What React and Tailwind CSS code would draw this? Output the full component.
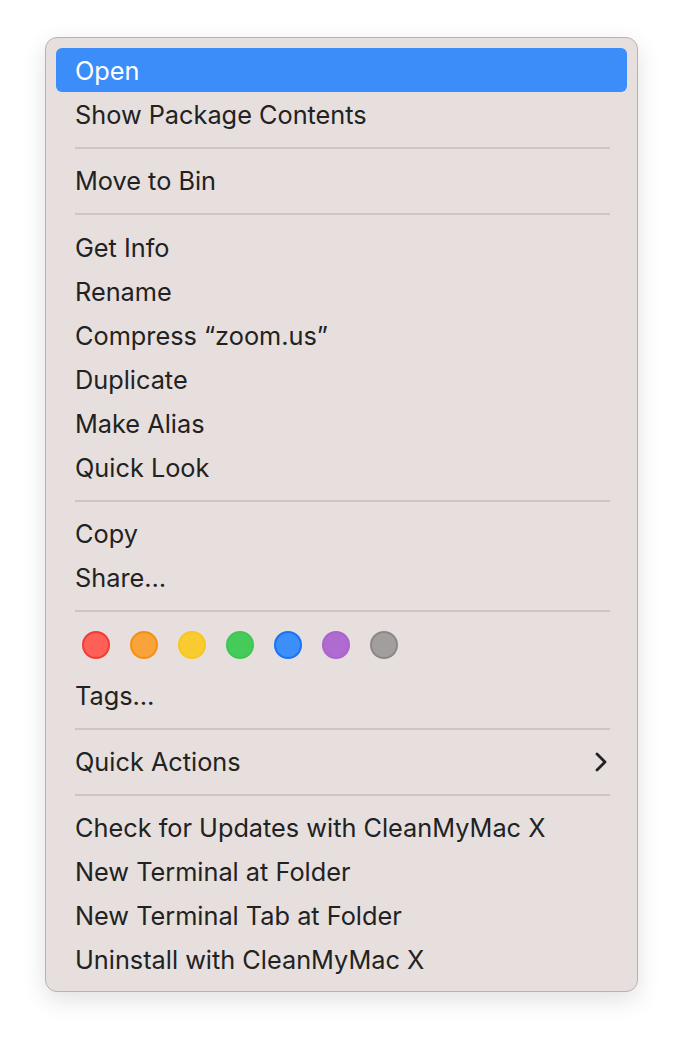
import React from "react";

function Item({ children, active, chevron }) {
  return (
    <div
      className={
        "h-[44px] rounded-[6px] pl-[19px] pr-[20px] pt-[2px] flex items-center justify-between " +
        (active ? "bg-[#3b8ef9] text-white" : "text-[#222222]")
      }
    >
      <span>{children}</span>
      {chevron && (
        <svg width="12" height="20" viewBox="0 0 12 20" className="text-[#222222]">
          <polyline points="2,2 10,10 2,18" fill="none" stroke="currentColor" strokeWidth="2.8" strokeLinecap="round" strokeLinejoin="round" />
        </svg>
      )}
    </div>
  );
}

function Sep({ tall }) {
  return (
    <div className={(tall ? "h-[23px]" : "h-[22px]") + " flex items-center pl-[19px] pr-[17px] pt-[1px]"}>
      <div className="h-[2px] w-full bg-[#cdc6c5]" />
    </div>
  );
}

const dots = [
  ["bg-[#fe5f57]", "border-[#f23b35]"],
  ["bg-[#f9a33b]", "border-[#f78f12]"],
  ["bg-[#f8cb30]", "border-[#f8c522]"],
  ["bg-[#45cb5a]", "border-[#3ec653]"],
  ["bg-[#3c8ef8]", "border-[#1a73f5]"],
  ["bg-[#b06bd0]", "border-[#aa64cc]"],
  ["bg-[#a29e9d]", "border-[#8c8887]"],
];

export default function App() {
  return (
    <div
      className="w-[684px] h-[1046px] bg-white pl-[45px] pt-[37px]"
      style={{ fontFamily: "Inter, 'Noto Sans', sans-serif" }}
    >
      <div className="w-[593px] h-[955px] rounded-[12px] border border-[#b8b3b2] bg-[#e6dfde] p-[10px] shadow-[0_8px_24px_rgba(0,0,0,0.12)] text-[25.3px] leading-none">
        <Item active>Open</Item>
        <Item>Show Package Contents</Item>
        <Sep />
        <Item>Move to Bin</Item>
        <Sep tall />
        <Item>Get Info</Item>
        <Item>Rename</Item>
        <Item>Compress “zoom.us”</Item>
        <Item>Duplicate</Item>
        <Item>Make Alias</Item>
        <Item>Quick Look</Item>
        <Sep />
        <Item>Copy</Item>
        <Item>Share…</Item>
        <Sep />
        <div className="h-[52px] pl-[26px] pt-[10px] flex items-start gap-[20px]">
          {dots.map(([bg, bd], i) => (
            <div key={i} className={"w-[28px] h-[28px] rounded-full border-2 " + bg + " " + bd} />
          ))}
        </div>
        <Item>Tags…</Item>
        <Sep />
        <Item chevron>Quick Actions</Item>
        <Sep />
        <Item>Check for Updates with CleanMyMac X</Item>
        <Item>New Terminal at Folder</Item>
        <Item>New Terminal Tab at Folder</Item>
        <Item>Uninstall with CleanMyMac X</Item>
      </div>
    </div>
  );
}
